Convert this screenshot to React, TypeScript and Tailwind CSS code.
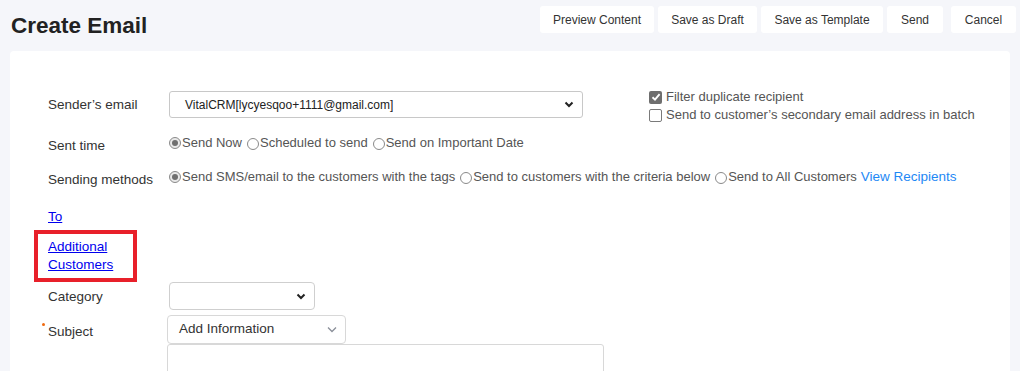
import { JSX } from "react";

const Radio = ({ checked, label }: { checked?: boolean; label: string }) => {
  return (
    <label className="flex items-center mr-[5px]">
      <span
        className={
          checked
            ? "w-[12px] h-[12px] rounded-full border border-[#8a8a8a] bg-[#e9e9e9] flex items-center justify-center mr-[1px]"
            : "w-[12px] h-[12px] rounded-full border border-[#8a8a8a] bg-white mt-[2px] mr-[1px]"
        }
      >
        {checked && <span className="w-[6px] h-[6px] rounded-full bg-[#6f6f6f]" />}
      </span>
      <span>{label}</span>
    </label>
  );
};

const Checkbox = ({ checked, label }: { checked?: boolean; label: string }) => {
  return (
    <label className="flex items-center h-[18px]">
      {checked ? (
        <span className="w-[13px] h-[13px] rounded-[2px] bg-[#6e6e6e] flex items-center justify-center mr-[4px]">
          <svg width="10" height="10" viewBox="0 0 10 10">
            <path d="M1.5 5.2 L4 7.6 L8.6 2.2" stroke="white" strokeWidth="1.9" fill="none" />
          </svg>
        </span>
      ) : (
        <span className="w-[13px] h-[13px] rounded-[2px] border border-[#7a7a7a] bg-white mr-[4px]" />
      )}
      <span>{label}</span>
    </label>
  );
};

const Chevron = ({ light }: { light?: boolean }): JSX.Element => (
  <svg width="10" height="7" viewBox="0 0 10 7">
    <path
      d={light ? "M1 1.5 L5 5.5 L9 1.5" : "M1.5 1.5 L5 5 L8.5 1.5"}
      stroke={light ? "#8a8f99" : "#222"}
      strokeWidth={light ? 1.3 : 2}
      fill="none"
    />
  </svg>
);

const buttons = [
  { text: "Preview Content", w: "w-[114px]" },
  { text: "Save as Draft", w: "w-[99px]" },
  { text: "Save as Template", w: "w-[122px]" },
  { text: "Send", w: "w-[56px]" },
];

export default function App() {
  return (
    <div className="w-[1020px] h-[371px] overflow-hidden bg-[#f5f6fa] font-['Liberation_Sans',Arial,sans-serif] text-[#333]">
      {/* Header */}
      <div className="flex justify-between h-[51px]">
        <h1 className="pl-[11px] pt-[15px] text-[22.5px] leading-[22px] font-bold text-[#222]">Create Email</h1>
        <div className="flex items-start pt-[6px] pr-[4px] gap-[4px]">
          {buttons.map((b) => (
            <button
              key={b.text}
              className={`${b.w} h-[27px] bg-white rounded-[3px] text-[12px] text-[#333]`}
            >
              {b.text}
            </button>
          ))}
          <button className="w-[65px] h-[27px] ml-[4px] bg-white rounded-[3px] text-[12px] text-[#333]">
            Cancel
          </button>
        </div>
      </div>

      {/* Form panel */}
      <div className="ml-[10px] w-[1000px] h-[320px] bg-white rounded-t-[4px] pt-[37px] pl-[38px] text-[13px]">
        {/* Sender's email */}
        <div className="flex items-start">
          <div className="w-[121px] h-[27px] mt-[4px] flex items-center text-[13.5px] text-[#333]">Sender’s email</div>
          <div className="w-[414px] h-[27px] mt-[3px] border border-[#c8c8c8] rounded-[3px] flex items-center justify-between pl-[15px] pr-[8px] text-[12px] text-[#222]">
            <span>VitalCRM[lycyesqoo+1111@gmail.com]</span>
            <Chevron />
          </div>
          <div className="ml-[66px] text-[#555] leading-[18px]">
            <Checkbox checked label="Filter duplicate recipient" />
            <Checkbox label="Send to customer’s secondary email address in batch" />
          </div>
        </div>

        {/* Sent time */}
        <div className="flex items-start mt-[10px] h-[20px]">
          <div className="w-[121px] mt-[3px] leading-[18px] text-[13.5px]">Sent time</div>
          <div className="flex leading-[18px] text-[#555]">
            <Radio checked label="Send Now" />
            <Radio label="Scheduled to send" />
            <Radio label="Send on Important Date" />
          </div>
        </div>

        {/* Sending methods */}
        <div className="flex items-start mt-[14px] h-[20px]">
          <div className="w-[121px] mt-[3px] leading-[18px] text-[13.5px]">Sending methods</div>
          <div className="flex leading-[18px] text-[#555]">
            <Radio checked label="Send SMS/email to the customers with the tags" />
            <Radio label="Send to customers with the criteria below" />
            <Radio label="Send to All Customers" />
            <a className="text-[13.5px] text-[#1e88f5] -ml-[1px]">View Recipients</a>
          </div>
        </div>

        {/* To */}
        <div className="mt-[20px] leading-[18px]">
          <a className="text-[#0000ee] underline text-[13.5px]">To</a>
        </div>

        {/* Additional Customers (highlighted) */}
        <div className="-ml-[14px] mt-[4px] w-[103px] border-[4px] border-[#e8202a] pl-[10px] py-[4px] leading-[18px]">
          <a className="text-[#0000ee] underline text-[13.5px]">
            Additional
            <br />
            Customers
          </a>
        </div>

        {/* Category */}
        <div className="flex items-center">
          <div className="w-[121px] text-[13.5px] mt-[3px]">Category</div>
          <div className="w-[146px] h-[28px] border border-[#cfcfcf] rounded-[4px] flex items-center justify-end pr-[8px]">
            <Chevron />
          </div>
        </div>

        {/* Subject */}
        <div className="flex items-center mt-[5px]">
          <div className="w-[119px] text-[13.5px] mt-[5px] relative">
            <span className="absolute -left-[6px] top-[1px] w-[3px] h-[3px] rounded-full bg-[#f06a0f]" />
            Subject
          </div>
          <div className="w-[179px] h-[29px] border border-[#d8d8d8] rounded-[4px] flex items-center justify-between pl-[11px] pr-[8px] text-[13.5px] text-[#333]">
            <span>Add Information</span>
            <Chevron light />
          </div>
        </div>
        <div className="ml-[119px] w-[437px] h-[60px] border border-[#d8d8d8] rounded-[3px]" />
      </div>
    </div>
  );
}
